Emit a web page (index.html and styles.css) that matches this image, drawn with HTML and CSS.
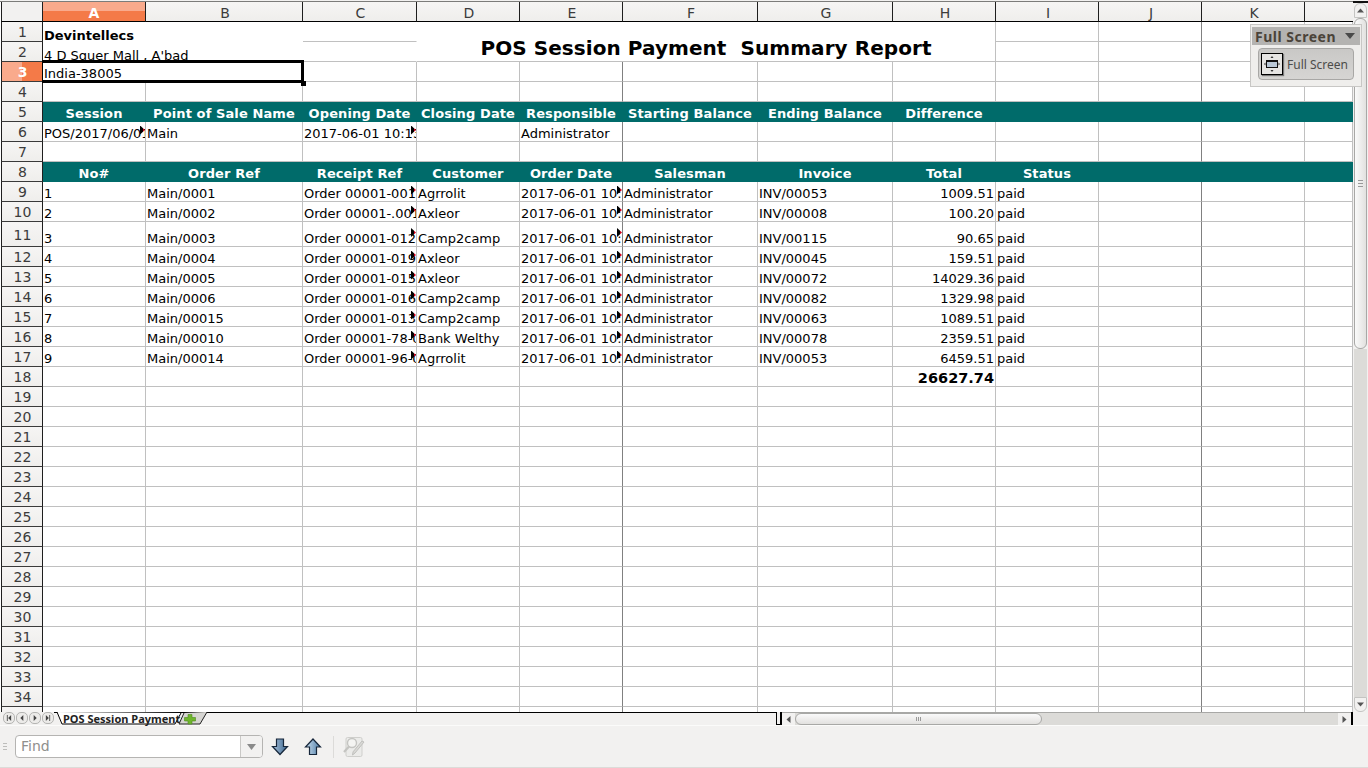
FILE: index.html
```html
<!DOCTYPE html>
<html lang="en">
<head>
<meta charset="UTF-8">
<title>POS Session Payment - Calc</title>
<link rel="stylesheet" href="styles.css">
</head>
<body>
<div class="sheet-area">
    <div class="grid-wrap">
        <table class="grid">
            <colgroup>
                <col class="c-head"><col class="c-a"><col class="c-b"><col class="c-c"><col class="c-d"><col class="c-e"><col class="c-f"><col class="c-g"><col class="c-h"><col class="c-i"><col class="c-j"><col class="c-k"><col class="c-l">
            </colgroup>
            <tr class="col-heads">
                <th class="corner"></th><th class="active">A</th><th>B</th><th>C</th><th>D</th><th>E</th><th>F</th><th>G</th><th>H</th><th>I</th><th>J</th><th>K</th><th class="last"></th>
            </tr>
            <tr><th>1</th><td colspan="2" class="bold open"></td><td class="no-right"></td><td colspan="5" rowspan="2" class="title">POS Session Payment&nbsp; Summary Report</td><td></td><td class="pb"></td><td></td><td></td></tr>
            <tr><th>2</th><td colspan="2" class="open"></td><td class="no-right"></td><td></td><td class="pb"></td><td></td><td></td></tr>
            <tr><th class="active">3</th><td colspan="2" class="selected">India-38005</td><td></td><td></td><td class="pb"></td><td></td><td></td><td></td><td></td><td class="pb"></td><td></td><td></td></tr>
            <tr><th>4</th><td></td><td></td><td></td><td></td><td class="pb"></td><td></td><td></td><td></td><td></td><td class="pb"></td><td></td><td></td></tr>
            <tr class="band"><th>5</th><td>Session</td><td>Point of Sale Name</td><td>Opening Date</td><td>Closing Date</td><td>Responsible</td><td>Starting Balance</td><td>Ending Balance</td><td>Difference</td><td></td><td></td><td></td><td></td></tr>
            <tr><th>6</th><td class="clip">POS/2017/06/01/01</td><td>Main</td><td class="clip">2017-06-01 10:13:35</td><td></td><td class="pb">Administrator</td><td></td><td></td><td></td><td></td><td class="pb"></td><td></td><td></td></tr>
            <tr><th>7</th><td></td><td></td><td></td><td></td><td class="pb"></td><td></td><td></td><td></td><td></td><td class="pb"></td><td></td><td></td></tr>
            <tr class="band"><th>8</th><td>No#</td><td>Order Ref</td><td>Receipt Ref</td><td>Customer</td><td>Order Date</td><td>Salesman</td><td>Invoice</td><td>Total</td><td>Status</td><td></td><td></td><td></td></tr>
            <tr><th>9</th><td>1</td><td>Main/0001</td><td class="clip">Order 00001-001-0001</td><td>Agrrolit</td><td class="clip pb">2017-06-01 10:13:35</td><td>Administrator</td><td>INV/00053</td><td class="num">1009.51</td><td>paid</td><td class="pb"></td><td></td><td></td></tr>
            <tr><th>10</th><td>2</td><td>Main/0002</td><td class="clip">Order 00001-.001-0002</td><td>Axleor</td><td class="clip pb">2017-06-01 10:13:35</td><td>Administrator</td><td>INV/00008</td><td class="num">100.20</td><td>paid</td><td class="pb"></td><td></td><td></td></tr>
            <tr class="tall"><th>11</th><td>3</td><td>Main/0003</td><td class="clip">Order 00001-012-0003</td><td>Camp2camp</td><td class="clip pb">2017-06-01 10:13:35</td><td>Administrator</td><td>INV/00115</td><td class="num">90.65</td><td>paid</td><td class="pb"></td><td></td><td></td></tr>
            <tr><th>12</th><td>4</td><td>Main/0004</td><td class="clip">Order 00001-019-0004</td><td>Axleor</td><td class="clip pb">2017-06-01 10:13:35</td><td>Administrator</td><td>INV/00045</td><td class="num">159.51</td><td>paid</td><td class="pb"></td><td></td><td></td></tr>
            <tr><th>13</th><td>5</td><td>Main/0005</td><td class="clip">Order 00001-015-0005</td><td>Axleor</td><td class="clip pb">2017-06-01 10:13:35</td><td>Administrator</td><td>INV/00072</td><td class="num">14029.36</td><td>paid</td><td class="pb"></td><td></td><td></td></tr>
            <tr><th>14</th><td>6</td><td>Main/0006</td><td class="clip">Order 00001-016-0006</td><td>Camp2camp</td><td class="clip pb">2017-06-01 10:13:35</td><td>Administrator</td><td>INV/00082</td><td class="num">1329.98</td><td>paid</td><td class="pb"></td><td></td><td></td></tr>
            <tr><th>15</th><td>7</td><td>Main/00015</td><td class="clip">Order 00001-013-0015</td><td>Camp2camp</td><td class="clip pb">2017-06-01 10:13:35</td><td>Administrator</td><td>INV/00063</td><td class="num">1089.51</td><td>paid</td><td class="pb"></td><td></td><td></td></tr>
            <tr><th>16</th><td>8</td><td>Main/00010</td><td class="clip">Order 00001-78-0010</td><td>Bank Welthy</td><td class="clip pb">2017-06-01 10:13:35</td><td>Administrator</td><td>INV/00078</td><td class="num">2359.51</td><td>paid</td><td class="pb"></td><td></td><td></td></tr>
            <tr><th>17</th><td>9</td><td>Main/00014</td><td class="clip">Order 00001-96-0014</td><td>Agrrolit</td><td class="clip pb">2017-06-01 10:13:35</td><td>Administrator</td><td>INV/00053</td><td class="num">6459.51</td><td>paid</td><td class="pb"></td><td></td><td></td></tr>
            <tr><th>18</th><td></td><td></td><td></td><td></td><td class="pb"></td><td></td><td></td><td class="num total">26627.74</td><td></td><td class="pb"></td><td></td><td></td></tr>
            <tr><th>19</th><td></td><td></td><td></td><td></td><td class="pb"></td><td></td><td></td><td></td><td></td><td class="pb"></td><td></td><td></td></tr>
            <tr><th>20</th><td></td><td></td><td></td><td></td><td class="pb"></td><td></td><td></td><td></td><td></td><td class="pb"></td><td></td><td></td></tr>
            <tr><th>21</th><td></td><td></td><td></td><td></td><td class="pb"></td><td></td><td></td><td></td><td></td><td class="pb"></td><td></td><td></td></tr>
            <tr><th>22</th><td></td><td></td><td></td><td></td><td class="pb"></td><td></td><td></td><td></td><td></td><td class="pb"></td><td></td><td></td></tr>
            <tr><th>23</th><td></td><td></td><td></td><td></td><td class="pb"></td><td></td><td></td><td></td><td></td><td class="pb"></td><td></td><td></td></tr>
            <tr><th>24</th><td></td><td></td><td></td><td></td><td class="pb"></td><td></td><td></td><td></td><td></td><td class="pb"></td><td></td><td></td></tr>
            <tr><th>25</th><td></td><td></td><td></td><td></td><td class="pb"></td><td></td><td></td><td></td><td></td><td class="pb"></td><td></td><td></td></tr>
            <tr><th>26</th><td></td><td></td><td></td><td></td><td class="pb"></td><td></td><td></td><td></td><td></td><td class="pb"></td><td></td><td></td></tr>
            <tr><th>27</th><td></td><td></td><td></td><td></td><td class="pb"></td><td></td><td></td><td></td><td></td><td class="pb"></td><td></td><td></td></tr>
            <tr><th>28</th><td></td><td></td><td></td><td></td><td class="pb"></td><td></td><td></td><td></td><td></td><td class="pb"></td><td></td><td></td></tr>
            <tr><th>29</th><td></td><td></td><td></td><td></td><td class="pb"></td><td></td><td></td><td></td><td></td><td class="pb"></td><td></td><td></td></tr>
            <tr><th>30</th><td></td><td></td><td></td><td></td><td class="pb"></td><td></td><td></td><td></td><td></td><td class="pb"></td><td></td><td></td></tr>
            <tr><th>31</th><td></td><td></td><td></td><td></td><td class="pb"></td><td></td><td></td><td></td><td></td><td class="pb"></td><td></td><td></td></tr>
            <tr><th>32</th><td></td><td></td><td></td><td></td><td class="pb"></td><td></td><td></td><td></td><td></td><td class="pb"></td><td></td><td></td></tr>
            <tr><th>33</th><td></td><td></td><td></td><td></td><td class="pb"></td><td></td><td></td><td></td><td></td><td class="pb"></td><td></td><td></td></tr>
            <tr><th>34</th><td></td><td></td><td></td><td></td><td class="pb"></td><td></td><td></td><td></td><td></td><td class="pb"></td><td></td><td></td></tr>
            <tr><th></th><td></td><td></td><td></td><td></td><td class="pb"></td><td></td><td></td><td></td><td></td><td class="pb"></td><td></td><td></td></tr>
        </table>
    </div>
    <div class="vscroll">
        <div class="v-btn"><svg width="7" height="5" viewBox="0 0 7 5"><path d="M3.5 0.5L7 4.5H0z" fill="#555"/></svg></div>
        <div class="v-thumb"><span></span><span></span><span></span></div>
        <div class="v-track"></div>
        <div class="v-btn v-btn-end"><svg width="7" height="5" viewBox="0 0 7 5"><path d="M0 .5H7L3.5 4.5z" fill="#555"/></svg></div>
    </div>
</div>

<div class="tabbar">
    <div class="tab-nav">
        <span class="nav-btn"><svg width="7" height="7" viewBox="0 0 7 7"><path d="M1 0h1v7H1zM6 0v7L2.5 3.5z" fill="#444"/></svg></span>
        <span class="nav-btn"><svg width="7" height="7" viewBox="0 0 7 7"><path d="M5 0v7L1.5 3.5z" fill="#444"/></svg></span>
        <span class="nav-btn"><svg width="7" height="7" viewBox="0 0 7 7"><path d="M2 0v7l3.5-3.5z" fill="#444"/></svg></span>
        <span class="nav-btn"><svg width="7" height="7" viewBox="0 0 7 7"><path d="M5 0h1v7H5zM1 0v7l3.5-3.5z" fill="#444"/></svg></span>
    </div>
    <div class="tabs">
        <svg class="tab-shape" width="126" height="13" viewBox="0 0 126 13"><path d="M0 0L5 12H118L124 1" fill="#fff" stroke="#000"/></svg>
        <span class="tab-label">POS Session Payment</span>
        <svg class="tab-add" width="30" height="13" viewBox="0 0 30 13">
            <path d="M6 1L1 12H22L29 0" fill="#d6d5d2" stroke="#222"/>
            <path d="M10 2.5h4v3h3.500v3.500h-3.500v3h-4v-3H6.500V5.500H10z" fill="#6fb52e" stroke="#4d8a1c" stroke-width=".6"/>
        </svg>
    </div>
    <div class="tab-rest"></div>
    <div class="tab-end"></div>
    <div class="split-bar"></div>
    <div class="hscroll">
        <span class="h-btn"><svg width="5" height="7" viewBox="0 0 5 7"><path d="M4.500 0v7L.5 3.500z" fill="#555"/></svg></span>
        <div class="h-thumb"><span></span><span></span><span></span></div>
        <div class="h-track"></div>
        <span class="h-btn"><svg width="5" height="7" viewBox="0 0 5 7"><path d="M.5 0v7l4-3.500z" fill="#555"/></svg></span>
    </div>
    <div class="split-bar"></div>
    <div class="corner-gap"></div>
</div>

<div class="findbar">
    <span class="grip"></span>
    <div class="find-box">
        <span class="find-text">Find</span>
        <span class="find-drop"><svg width="9" height="6" viewBox="0 0 9 6"><path d="M0 0H9L4.500 6z" fill="#8a8a8a"/></svg></span>
    </div>
    <button class="tool tool-down" type="button">
        <svg width="18" height="18" viewBox="0 0 18 18"><defs><linearGradient id="blueD" x1="0" y1="0" x2="1" y2="0"><stop offset="0" stop-color="#a9c3dc"/><stop offset="1" stop-color="#3c668f"/></linearGradient></defs><path d="M5.500 1h7v7.500h4L9 16.500 1.500 8.500h4z" fill="url(#blueD)" stroke="#16263a" stroke-width="1.200"/></svg>
    </button>
    <button class="tool tool-up" type="button">
        <svg width="18" height="18" viewBox="0 0 18 18"><defs><linearGradient id="blueU" x1="0" y1="0" x2="1" y2="0"><stop offset="0" stop-color="#cfe2f2"/><stop offset="1" stop-color="#4c7ba6"/></linearGradient></defs><path d="M9 1l7.500 8h-4v7.500h-7V9h-4z" fill="url(#blueU)" stroke="#16263a" stroke-width="1.200"/></svg>
    </button>
    <span class="find-sep"></span>
    <svg class="find-opts" width="24" height="22" viewBox="0 0 24 22">
        <rect x="4" y="1.500" width="16" height="19" rx="1.500" fill="#ebebe9" stroke="#cfcfcc"/>
        <circle cx="10" cy="7" r="4.500" fill="#f4f4f2" stroke="#c4c4c1" stroke-width="1.400"/>
        <path d="M7 10.500L2 16" stroke="#c4c4c1" stroke-width="2.200"/>
        <path d="M22 6L13 17l-2.500 2 .6-3.200L20 5z" fill="#d9d9d6" stroke="#c0c0bd"/>
    </svg>
</div>

<div class="company">
    <div class="company-name">Devintellecs</div>
    <div>4 D Squer Mall , A'bad</div>
</div>

<div class="float-bar">
    <div class="float-title"><span>Full Screen</span><svg width="10" height="6" viewBox="0 0 10 6"><path d="M0 0H10L5 6z" fill="#4a4a4a"/></svg></div>
    <div class="float-btn">
        <span class="float-icon">
            <svg width="16" height="16" viewBox="0 0 16 16">
                <rect x="2.500" y="4.500" width="11" height="7" fill="#b9c7d6" stroke="#111"/>
                <path d="M2.500 5.500h11" stroke="#111"/>
                <path d="M8 0l1.500 2h-3zM8 16l-1.500-2h3zM0 8l1.500-1.500v3zM16 8l-1.500-1.500v3z" fill="#333"/>
            </svg>
        </span>
        <span class="float-label">Full Screen</span>
    </div>
</div>
</body>
</html>
```

FILE: styles.css
```css
html, body {
    height: 100%;
}
body {
    position: relative;
    margin: 0;
    overflow: hidden;
    background-color: #f2f1f0;
    font-family: "DejaVu Sans", sans-serif;
    font-size: 13px;
    display: flex;
    flex-direction: column;
}

/* sheet */
.sheet-area {
    display: flex;
    height: 712px;
    flex: none;
    border-top: 1px solid #f2f1f0;
    box-sizing: border-box;
}
.grid-wrap {
    width: 1353px;
    overflow: hidden;
    background-color: #fff;
    border-top: 1px solid #7c7c7a;
    padding-left: 1px;
    box-sizing: border-box;
}
.grid {
    border-collapse: separate;
    border-spacing: 0;
    table-layout: fixed;
    width: 1352px;
}
.c-head { width: 42px; }
.c-a { width: 103px; }
.c-b { width: 157px; }
.c-c { width: 114px; }
.c-d { width: 103px; }
.c-e { width: 103px; }
.c-f { width: 135px; }
.c-g { width: 135px; }
.c-h { width: 103px; }
.c-i { width: 103px; }
.c-j { width: 103px; }
.c-k { width: 103px; }
.c-l { width: 48px; }

.grid tr {
    height: 20px;
}
.grid tr.tall {
    height: 25px;
}
.grid tr.col-heads {
    height: 20px;
}
.grid th, .grid td {
    box-sizing: border-box;
    padding: 0;
    overflow: hidden;
    white-space: nowrap;
    font-weight: normal;
}
.grid td {
    position: relative;
    padding: 0 1px;
    border-right: 1px solid #c0c0c0;
    border-bottom: 1px solid #c0c0c0;
    vertical-align: bottom;
    line-height: 14px;
    color: #000;
}
.grid th {
    background: linear-gradient(#f6f5f4, #efeeec);
    color: #3c3c3c;
    font-size: 14px;
    line-height: 15px;
    text-align: center;
    padding-top: 2px;
    border-right: 1px solid #1e1e1e;
    border-bottom: 1px solid #3a3a3a;
    border-left: 0;
}
.grid tr > th:first-child {
    border-left: 1px solid #1e1e1e;
    padding-left: 1px;
}
.grid .col-heads th {
    border-left: 0;
    border-bottom: 1px solid #000;
    height: 20px;
    padding-top: 3px;
    padding-left: 2px;
    line-height: 15px;
}
.grid .col-heads th.last {
    border-right: 0;
}
.grid th.corner {
    background: #f2f1f0;
}
.grid .col-heads th.active {
    background: linear-gradient(#f9aa8c 50%, #f47a48 50%);
    color: #fff;
    font-weight: bold;
    padding-left: 0;
}
.grid tr > th.active:first-child {
    background: linear-gradient(90deg, #f9aa8c 50%, #f47a48 50%);
    color: #fff;
    font-weight: bold;
}
.grid td.open {
    border-color: transparent;
}
.grid td.no-right {
    border-right-color: transparent;
}
.grid td.title {
    text-align: center;
    vertical-align: bottom;
    font-size: 20px;
    font-weight: bold;
    line-height: 24px;
    letter-spacing: 0.06px;
    padding-bottom: 1px;
}
.grid td.pb {
    border-right-color: #808080;
}
.grid td.selected {
    overflow: visible;
    z-index: 1;
}
.grid td.selected::before {
    content: "";
    position: absolute;
    left: -1px;
    right: -2px;
    top: -2px;
    bottom: -2px;
    border: 3px solid #000;
    border-left-width: 1px;
}
.grid td.selected::after {
    content: "";
    position: absolute;
    right: -4px;
    bottom: -5px;
    width: 5px;
    height: 5px;
    background-color: #000;
}
.grid td.num {
    text-align: right;
}
.grid td.total {
    font-size: 14.5px;
    font-weight: bold;
    line-height: 16px;
}
.grid td.clip::after {
    content: "";
    position: absolute;
    right: 0;
    top: 50%;
    margin-top: -6px;
    width: 5px;
    height: 9px;
    background: linear-gradient(90deg, #000 60%, #d0001c 60%);
    clip-path: polygon(0 0, 100% 50%, 0 100%);
}
.grid .band td {
    background-color: #006b6a;
    border-color: #006b6a;
    color: #fff;
    font-weight: bold;
    text-align: center;
    overflow: visible;
    line-height: 15px;
    vertical-align: middle;
    padding-top: 3px;
    letter-spacing: 0.1px;
}
.grid .band td:last-child {
    border-right: 0;
}

/* A1:B2 header lines sit over the merged cells */
.company {
    position: absolute;
    left: 44px;
    top: 26px;
    line-height: 20px;
    color: #000;
}
.company-name {
    font-weight: bold;
}

/* scrollbars */
.vscroll {
    width: 15px;
    flex: none;
    display: flex;
    flex-direction: column;
    background-color: #f2f1f0;
    border-top: 2px solid #111;
    box-sizing: border-box;
    padding-left: 1px;
}
.v-btn {
    height: 15px;
    flex: none;
    margin-right: 1px;
    background-color: #f2f1f0;
    border: 1px solid #c4c4c2;
    border-radius: 6px 6px 0 0;
    display: flex;
    align-items: center;
    justify-content: center;
    box-sizing: border-box;
}
.v-btn-end {
    border-radius: 0 0 6px 6px;
}
.v-thumb {
    height: 331px;
    flex: none;
    margin-right: 1px;
    border: 1px solid #a8a8a6;
    border-radius: 6px;
    background: linear-gradient(90deg, #fafafa, #e2e1df);
    box-sizing: border-box;
    display: flex;
    flex-direction: column;
    justify-content: center;
    align-items: center;
    gap: 2px;
}
.v-thumb span {
    width: 5px;
    height: 1px;
    background-color: #999;
}
.v-track {
    flex: 1;
    margin-right: 1px;
    background-color: #dcdbd8;
}

/* sheet tabs row */
.tabbar {
    display: flex;
    height: 13px;
    flex: none;
    align-items: stretch;
    background-color: #f2f1f0;
}
.tab-nav {
    display: flex;
    gap: 1px;
    padding-left: 3px;
    width: 54px;
    box-sizing: border-box;
    flex: none;
}
.nav-btn {
    width: 12px;
    height: 12px;
    border: 1px solid #b5b5b3;
    border-radius: 5px;
    background-color: #ecebe9;
    box-sizing: border-box;
    display: flex;
    align-items: center;
    justify-content: center;
}
.nav-btn svg {
    width: 6px;
    height: 6px;
}
.tabs {
    position: relative;
    width: 152px;
    flex: none;
    border-top: 1px solid #000;
    box-sizing: border-box;
}
.tab-shape {
    position: absolute;
    left: 3px;
    top: -1px;
}
.tab-label {
    position: absolute;
    left: 9px;
    top: -1px;
    font-family: "Noto Sans", sans-serif;
    font-size: 11px;
    font-weight: bold;
    line-height: 13px;
    color: #222;
    white-space: nowrap;
}
.tab-add {
    position: absolute;
    left: 124px;
    top: -1px;
}
.tab-rest {
    flex: 1;
    border-top: 1px solid #000;
    border-right: 1px solid #000;
}
.tab-end {
    width: 3px;
    flex: none;
    border-bottom: 1px solid #000;
}
.split-bar {
    width: 2px;
    flex: none;
    background-color: #000;
}
.hscroll {
    width: 569px;
    flex: none;
    display: flex;
    align-items: stretch;
    background-color: #dcdbd8;
    border-top: 1px solid #a8a8a6;
    box-sizing: border-box;
}
.h-btn {
    width: 13px;
    flex: none;
    display: flex;
    align-items: center;
    justify-content: center;
    background-color: #f2f1f0;
}
.h-thumb {
    width: 247px;
    flex: none;
    border: 1px solid #a8a8a6;
    border-radius: 6px;
    background: linear-gradient(#fafafa, #e2e1df);
    box-sizing: border-box;
    display: flex;
    align-items: center;
    justify-content: center;
    gap: 1px;
}
.h-thumb span {
    width: 1px;
    height: 4px;
    background-color: #999;
}
.h-track {
    flex: 1;
}
.corner-gap {
    width: 15px;
    flex: none;
}

/* find toolbar */
.findbar {
    flex: 1;
    display: flex;
    align-items: center;
    border-top: 1px solid #fbfbfa;
    border-bottom: 1px solid #dcdbd8;
    background-color: #f2f1f0;
    box-sizing: border-box;
    padding-left: 3px;
}
.grip {
    width: 4px;
    height: 8px;
    margin-right: 8px;
    background: repeating-linear-gradient(#bdbdbb 0 1px, transparent 1px 3px);
}
.find-box {
    width: 248px;
    height: 23px;
    display: flex;
    border: 1px solid #b5b4b2;
    border-radius: 4px;
    background-color: #fff;
    box-sizing: border-box;
}
.find-text {
    flex: 1;
    padding-left: 5px;
    font-size: 14px;
    line-height: 21px;
    color: #8f8f8d;
}
.find-drop {
    width: 21px;
    border-left: 1px solid #c9c8c6;
    background-color: #f2f1f0;
    border-radius: 0 3px 3px 0;
    display: flex;
    align-items: center;
    justify-content: center;
}
.tool {
    width: 18px;
    height: 18px;
    padding: 0;
    border: none;
    background: none;
    flex: none;
}
.tool-down {
    margin-left: 8px;
}
.tool-up {
    margin-left: 15px;
}
.find-sep {
    width: 1px;
    height: 22px;
    margin-left: 11px;
    background-color: #dcdbd9;
}
.find-opts {
    margin-left: 8px;
}

/* floating full screen toolbar */
.float-bar {
    position: absolute;
    left: 1250px;
    top: 24px;
    width: 112px;
    height: 63px;
    box-sizing: border-box;
    background-color: #efeeec;
    border: 1px solid #c8c7c5;
    padding: 2px 1px;
}
.float-title {
    height: 18px;
    padding: 0 3px;
    background-color: #b4b3b1;
    display: flex;
    align-items: center;
    justify-content: space-between;
    font-weight: bold;
    font-size: 14px;
    letter-spacing: 0.5px;
    color: #4a4339;
    font-family: "Noto Sans", "DejaVu Sans", sans-serif;
}
.float-title svg {
    margin-right: 2px;
}
.float-btn {
    margin: 3px 6px 0 6px;
    height: 32px;
    box-sizing: border-box;
    display: flex;
    align-items: center;
    gap: 4px;
    padding-left: 2px;
    border: 1px solid #a8a7a5;
    border-radius: 4px;
    background: linear-gradient(#c9c8c6, #d6d5d3);
}
.float-icon {
    width: 22px;
    height: 22px;
    box-sizing: border-box;
    border: 1px solid #000;
    background-color: #e6e5e3;
    box-shadow: 1px 1px 1px #777;
    display: flex;
    align-items: center;
    justify-content: center;
}
.float-label {
    font-family: "Noto Sans", "Open Sans", sans-serif;
    font-size: 12px;
    color: #4c4c4a;
    white-space: nowrap;
}
```
